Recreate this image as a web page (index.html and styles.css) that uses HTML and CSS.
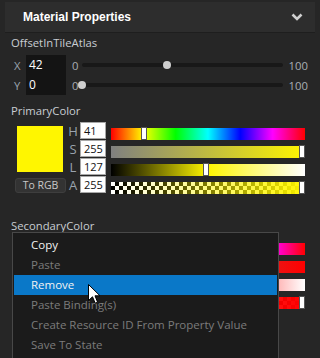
FILE: index.html
```html
<!DOCTYPE html>
<html lang="en">
<head>
  <meta charset="UTF-8">
  <meta name="viewport" content="width=device-width, initial-scale=1.0">
  <title>Material Properties</title>
  <link rel="stylesheet" href="styles.css">
</head>
<body>
  <div class="panel">
    <div class="header">
      <span>Material Properties</span>
      <svg class="chevron" width="12" height="8" viewBox="0 0 12 8"><path d="M1.5 1.5 L6 6 L10.5 1.5" fill="none" stroke="#d0d0d0" stroke-width="2.6"/></svg>
    </div>

    <div class="content">
      <!-- vector property -->
      <div class="prop">
        <div class="prop-name">OffsetInTileAtlas</div>
        <div class="vec">
          <div class="vec-row">
            <span class="axis">X</span>
            <span class="num">42</span>
            <span class="min">0</span>
            <div class="track"><span class="thumb" style="left:42%"></span></div>
            <span class="max">100</span>
          </div>
          <div class="vec-row">
            <span class="axis">Y</span>
            <span class="num">0</span>
            <span class="min">0</span>
            <div class="track"><span class="thumb" style="left:0%"></span></div>
            <span class="max">100</span>
          </div>
        </div>
      </div>

      <!-- color properties -->
      <div class="prop">
        <div class="prop-name">PrimaryColor</div>
        <div class="color-editor">
          <div class="preview">
            <div class="swatch yellow"></div>
            <button class="to-rgb">To RGB</button>
          </div>
          <div class="channels">
            <span class="ch">H</span><span class="ch-input">41</span>
            <div class="bar hue"><span class="handle" style="--v:0.16"></span></div>
            <span class="ch">S</span><span class="ch-input">255</span>
            <div class="bar sat-yellow"><span class="handle" style="--v:1"></span></div>
            <span class="ch">L</span><span class="ch-input">127</span>
            <div class="bar lum-yellow"><span class="handle" style="--v:0.49"></span></div>
            <span class="ch">A</span><span class="ch-input">255</span>
            <div class="bar alpha alpha-yellow"><span class="handle" style="--v:1"></span></div>
          </div>
        </div>
      </div>

      <div class="prop">
        <div class="prop-name">SecondaryColor</div>
        <!-- mostly covered by the context menu -->
        <div class="color-editor">
          <div class="preview">
            <div class="swatch red"></div>
            <button class="to-rgb"></button>
          </div>
          <div class="channels">
            <span class="ch"></span><span class="ch-input"></span>
            <div class="bar hue"></div>
            <span class="ch"></span><span class="ch-input"></span>
            <div class="bar sat-red"></div>
            <span class="ch"></span><span class="ch-input"></span>
            <div class="bar lum-red"></div>
            <span class="ch"></span><span class="ch-input"></span>
            <div class="bar alpha alpha-red"><span class="handle" style="--v:1"></span></div>
          </div>
        </div>
      </div>
    </div>
  </div>

  <!-- context menu over the secondary color -->
  <div class="menu">
    <div class="item">Copy</div>
    <div class="item disabled">Paste</div>
    <div class="item selected">Remove</div>
    <div class="item disabled">Paste Binding(s)</div>
    <div class="item disabled">Create Resource ID From Property Value</div>
    <div class="item disabled">Save To State</div>
  </div>

  <svg class="cursor" width="13" height="21" viewBox="0 0 13 21"><path d="M0.5 0.5 L0.5 16.5 L4.5 12.8 L7.2 19.2 L9.6 18.2 L7 11.8 L12 11.8 Z" fill="#fff" stroke="#000" stroke-width="1"/></svg>
</body>
</html>
```

FILE: styles.css
```css
html, body {
  height: 100%;
  overflow: hidden;
}
body {
  margin: 0;
  font-family: 'Open Sans', 'Noto Sans', sans-serif;
  font-size: 11.3px;
  background-color: #262626;
  color: #c8cdd2;
}
.panel {
  padding: 2px 5px 0 5px;
}
.header {
  height: 30px;
  background-color: #2d2d2d;
  border-bottom: 1px solid #1e1e1e;
  display: flex;
  align-items: center;
  justify-content: space-between;
  padding: 0 12px 0 18px;
  color: #fff;
  font-family: 'Liberation Sans', sans-serif;
  font-weight: bold;
  font-size: 12px;
}
.chevron {
  margin-top: -1px;
}
.content {
  padding-left: 6px;
}
.prop-name {
  height: 20px;
  line-height: 20px;
}

/* vector rows */
.vec {
  margin-top: 2px;
  margin-bottom: 6px;
}
.vec-row {
  display: flex;
  align-items: center;
  height: 20px;
  padding-right: 7px;
}
.axis {
  width: 15px;
  padding-left: 3px;
  box-sizing: border-box;
  color: #9aa3ad;
}
.num {
  width: 40px;
  height: 20px;
  line-height: 20px;
  background-color: #141414;
  color: #fff;
  padding-left: 3px;
  box-sizing: border-box;
  font-size: 12px;
}
.min {
  margin-left: 6px;
  color: #a8adb2;
}
.track {
  position: relative;
  flex: 1;
  height: 4px;
  margin-left: 4px;
  background-color: #181818;
  border-radius: 2px;
}
.thumb {
  position: absolute;
  top: -2px;
  width: 8px;
  height: 8px;
  margin-left: -4px;
  border-radius: 50%;
  background-color: #cfcfcf;
}
.max {
  margin-left: 6px;
  color: #a8adb2;
}

/* color editor */
.color-editor {
  display: flex;
  padding-left: 4px;
  margin-top: 1px;
  margin-bottom: 22px;
}
.preview {
  width: 51px;
  display: flex;
  flex-direction: column;
  align-items: center;
}
.swatch {
  width: 46px;
  height: 46px;
  margin-top: 4px;
  margin-right: 1px;
}
.swatch.yellow { background-color: #fff600; }
.swatch.red { background-color: #ff0000; }
.to-rgb {
  margin-top: 6px;
  width: 51px;
  height: 15px;
  padding: 0;
  font-family: inherit;
  font-size: 10.5px;
  line-height: 13px;
  color: #c8c8c8;
  background-color: #333;
  border: 1px solid #3e3e3e;
  border-radius: 3px;
}
.channels {
  display: grid;
  grid-template-columns: 14px 26px 199px;
  grid-auto-rows: 18px;
}
.ch {
  text-align: center;
  font-size: 13px;
  line-height: 18px;
  color: #9aa3ad;
}
.ch-input {
  height: 17px;
  background-color: #fff;
  border: 1px solid #a8a8a8;
  box-sizing: border-box;
  color: #111;
  font-size: 11px;
  line-height: 15px;
  padding-left: 3px;
}
.bar {
  position: relative;
  align-self: end;
  height: 12px;
  margin-left: 5px;
}
.handle {
  position: absolute;
  top: -1px;
  left: calc(var(--v) * (100% - 6px));
  width: 4px;
  height: 11px;
  background-color: #fff;
  border: 1px solid #555;
}
.hue {
  background: linear-gradient(to right, #f00, #ff0, #0f0, #0ff, #00f, #f0f, #f00);
}
.sat-yellow { background: linear-gradient(to right, #808080, #fff600); }
.lum-yellow { background: linear-gradient(to right, #000, #fff600, #fff); }
.sat-red { background: linear-gradient(to right, #808080, #f00); }
.lum-red { background: linear-gradient(to right, #000, #f00, #fff); }
.alpha {
  background-size: 100% 100%, 8px 8px;
}
.alpha-yellow {
  background-image: linear-gradient(to right, rgba(255,246,0,0), #fff600),
    conic-gradient(#000 25%, #fff 0 50%, #000 0 75%, #fff 0);
}
.alpha-red {
  background-image: linear-gradient(to right, rgba(255,0,0,0.6), #f00),
    conic-gradient(#000 25%, #fff 0 50%, #000 0 75%, #fff 0);
}

/* context menu */
.menu {
  position: absolute;
  left: 12px;
  top: 232px;
  width: 263px;
  height: 126px;
  padding: 2px 1px;
  background-color: #1b1b1b;
  border: 1px solid #484848;
  border-bottom: 0;
}
.item {
  height: 20px;
  line-height: 20px;
  padding-left: 17px;
  color: #f2f2f2;
  font-size: 11.5px;
  white-space: nowrap;
}
.item.disabled {
  color: #7c7c7c;
}
.item.selected {
  background-color: #0a78c8;
}
.cursor {
  position: absolute;
  left: 88px;
  top: 284px;
}
```
